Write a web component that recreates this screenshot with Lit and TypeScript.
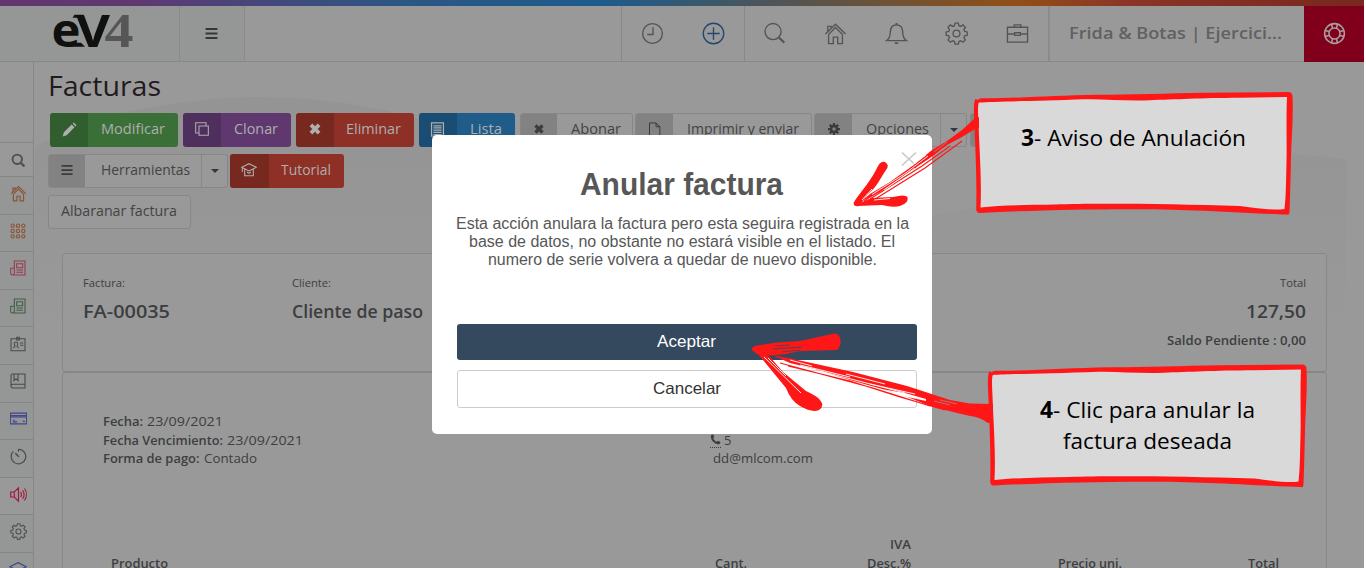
import { LitElement, html, css, svg, nothing } from "lit";
import { customElement, property } from "lit/decorators.js";

/** Single-line label whose glyphs are condensed or expanded to span `w` pixels. */
@customElement("fit-text")
class FitText extends LitElement {
  @property({ type: Number }) w = 0;
  @property() text = "";
  static styles = css`
    :host { display: inline-flex; white-space: nowrap; flex: none; }
    .t { display: block; white-space: pre; transform-origin: 0 50%; flex: none; }
  `;
  updated() {
    const el = this.renderRoot.querySelector(".t") as HTMLElement;
    el.style.transform = "none";
    const natural = el.getBoundingClientRect().width;
    el.style.transform = `scaleX(${(this.w / natural).toFixed(4)})`;
    this.style.width = this.w + "px";
  }
  render() {
    return html`<span class="t">${this.text}</span>`;
  }
}

const GEAR = svg`<path d="M10.300 2h3.400l.6 2.700 1.900.8 2.400-1.500 2.400 2.400-1.500 2.400.8 1.900 2.700.6v3.400l-2.700.6-.8 1.900 1.500 2.400-2.400 2.400-2.400-1.500-1.900.8-.6 2.700h-3.400l-.6-2.700-1.900-.8L5.400 22 3 19.600l1.500-2.400-.8-1.900L1 14.700v-3.400l2.700-.6.8-1.900L3 6.400 5.400 4l2.400 1.500 1.900-.8z" transform="translate(.2 -.9)"/><circle cx="12" cy="12" r="3.600"/>`;

const ICONS: Record<string, unknown> = {
  clock: svg`<circle cx="12" cy="12" r="10.300"/><path d="M12.500 5.500v7.500h-6"/>`,
  plus: svg`<circle cx="12" cy="12" r="10.700"/><path d="M5.500 12h13M12 5.500v13"/>`,
  search: svg`<circle cx="10.500" cy="10" r="8.400"/><path d="M16.500 16.200l5.700 5.300" stroke-width="2.200"/>`,
  home: svg`<path d="M1.500 12.500L12 2.300l10.500 10.200M4.700 13L12 5.800l7.300 7.200M4.800 13v9.500h4.900v-6.700h4.600v6.700h4.900V13M4 10V4.500h3.500V7"/>`,
  bell: svg`<path d="M1.500 19.500c3-2 4-4 4-8.500 0-5 2.500-8 6.500-8s6.500 3 6.500 8c0 4.500 1 6.500 4 8.500z"/><path d="M12 1v2M10.200 22h3.600" stroke-width="2"/>`,
  gear: GEAR,
  briefcase: svg`<path d="M1.500 5.500h21v15.500h-21zM8.500 5.500V3h7v2.500M1.500 12.500H9m6 0h7.500M9 11.200h6v2.800H9z"/>`,
  ring: svg`<circle cx="12" cy="12" r="10.300"/><circle cx="12" cy="12" r="5.800"/><path d="M8.800 2l1.200 4.500M15.200 2L14 6.500M8.800 22l1.200-4.500M15.200 22L14 17.500M2 8.800l4.500 1.200M2 15.200L6.500 14M22 8.800L17.500 10M22 15.200L17.500 14"/>`,
  find: svg`<circle cx="10" cy="10" r="7.500" stroke-width="3"/><path d="M15.500 15.500l6 6" stroke-width="3.600"/>`,
  grid: svg`${[4, 12, 20].map((y) => [4, 12, 20].map((x) => svg`<circle cx=${x} cy=${y} r="2.500"/>`))}`,
  news: svg`<path d="M6.500 1.500h16v21h-19c-1.500 0-2.500-1-2.500-2.500V12.500h5.500zM6.500 12v8c0 1.500-1 2.500-2.500 2.500M10 5.500h9v6h-9zM9.500 15h10M9.500 18.500h10"/>`,
  idcard: svg`<path d="M1.500 4h21v18h-21zM10 2h4v4h-4zM5 18.500c0-2 2.500-1.500 2.500-3.500C5.500 12.500 6 9 9 9s3.500 3.500 1.500 6c0 2 2.500 1.500 2.500 3.500M15 10.500h5M15 14h5"/>`,
  book: svg`<path d="M4 1.500h18.500v21H4c-1.700 0-2.500-1-2.500-2.500V4c0-1.500.8-2.500 2.500-2.500zM1.500 19c.3-1.300 1-2 2.500-2h18.500M6 1.500v10L9 8.500l3 3v-10"/>`,
  card: svg`<path d="M.5 4.500h23v15H.5zM.5 8h23M.5 9.800h23M4 14.500h3M4 16.800h6M18 16h3"/>`,
  timer: svg`<path d="M12 1.800v3.500M12 1.800a10.300 10.300 0 1 1-7.300 3"/><path d="M7.500 7.500l5 5" stroke-width="2"/>`,
  volume: svg`<path d="M1 8.500h5l6-6v19l-6-6H1zM6 8.500v7M15 8.500c1.300 2 1.300 5 0 7M17.800 6c2.500 3.500 2.500 8.500 0 12M20.500 3.500c3.500 5 3.500 12 0 17"/>`,
  layers: svg`<path d="M12 3.500l11 5.500-11 5.500L1 9zM1 13l11 5.500L23 13"/>`,
  bars: svg`<path d="M2.500 4.800h19M2.500 12h19M2.500 19.200h19" stroke-width="3"/>`,
  pencil: svg`<path d="M1 23l2-6.500L15.500 4l4.500 4.500L7.500 21zM17 2.500l1.800-1.700 4.500 4.500L21.500 7z" fill="currentColor" stroke="none"/>`,
  copy: svg`<path d="M7.500 7.500h14v14h-14zM7 18H2.500V2.500H18V7"/>`,
  cross: svg`<path d="M5 5l14 14M19 5L5 19" stroke-width="6.500"/>`,
  list: svg`<path d="M2.500 1.500h19v21h-19z" stroke-width="2"/><path d="M5.500 6h13M5.500 9.500h13M5.500 13h13M5.500 16.500h13M5.500 20h13" stroke-width="2"/>`,
  page: svg`<path d="M4 1.500h10.500l6 6v15H4zM14.500 1.500v6h6"/>`,
  cog: svg`<circle cx="12" cy="12" r="6" stroke-width="5"/><path d="M12 0v5M12 19v5M0 12h5M19 12h5M3.500 3.500l3.500 3.500M17 17l3.500 3.500M20.500 3.500L17 7M7 17l-3.500 3.500" stroke-width="4.500"/>`,
  cap: svg`<path d="M12 2.500l11 5.500-11 5.500L1 8zM5.500 10.500v10h13v-10M9 15l3 2 3-2M2 9v6"/>`,
  phone: svg`<path d="M2 4C3 1.500 5.500.5 7 1.500l2.500 5L7 9.500c1 3 4 6.500 7.500 7.500l3-2.500 5 3c.5 2-1 4.500-3.500 5C10 23 .5 13 2 4z" fill="currentColor" stroke="none"/>`,
};

const icon = (name: string, size: number, sw = 1.4) =>
  html`<svg class="ico" width=${size} height=${size} viewBox="0 0 24 24" fill="none" stroke="currentColor" stroke-width=${sw}>${ICONS[name]}</svg>`;

const SIDE: [string, string, number][] = [
  ["home", "#8a5238", 17], ["grid", "#8c5236", 16], ["news", "#99394e", 16], ["news", "#3c6046", 16],
  ["idcard", "#4b4b4d", 16], ["book", "#48484c", 16], ["card", "#41458c", 17], ["timer", "#484a4a", 17],
  ["volume", "#a0183c", 17], ["gear", "#505252", 17], ["layers", "#41458c", 18],
];

interface Btn { l: string; i?: string; tone: string; m: number; w: number; iw: number; tw: number; caret?: number; is?: number; shift?: number }
const ROW1: Btn[] = [
  { l: "Modificar", i: "pencil", tone: "green", m: 2, w: 128, iw: 38, tw: 64, is: 15 },
  { l: "Clonar", i: "copy", tone: "purple", m: 5, w: 108, iw: 38, tw: 44, is: 16 },
  { l: "Eliminar", i: "cross", tone: "red", m: 4.5, w: 118, iw: 38, tw: 55, is: 14 },
  { l: "Lista", i: "list", tone: "blue", m: 5, w: 96, iw: 38, tw: 32, is: 15 },
  { l: "Abonar", i: "cross", tone: "plain", m: 5, w: 113.5, iw: 36, tw: 50, is: 12, shift: 3 },
  { l: "Imprimir y enviar", i: "page", tone: "plain", m: 2, w: 176.5, iw: 36.5, tw: 112, is: 15, shift: 3 },
  { l: "Opciones", i: "cog", tone: "plain", m: 2.5, w: 153, iw: 37, tw: 63, caret: 26, is: 12, shift: 3 },
  { l: "", i: "cross", tone: "plain", m: 2.5, w: 114, iw: 37, tw: 50, is: 12 },
];
const ROW2: Btn[] = [
  { l: "Herramientas", i: "bars", tone: "plain", m: 0, w: 180, iw: 36, tw: 89, caret: 26, is: 14, shift: 4 },
  { l: "Tutorial", i: "cap", tone: "red", m: 1.5, w: 114, iw: 39, tw: 50, is: 16 },
];
const ROW3: Btn[] = [{ l: "Albaranar factura", tone: "plain", m: 0, w: 142.5, iw: 0, tw: 116 }];

const FRAME_OUT = "M3 3C4 1.500 6 1.300 9 1.300C50 1 80 -1.500 120 -2.200C160 -2.200 190 -3.500 230 -4.200L313 -5C316 -5 317.500 -3.500 317.500 0C318.500 20 316.500 40 316 60C315.500 85 315 100 314.500 115C314 118 314 117.800 311 117.600C290 117 250 114.500 220 113.500C170 111 80 112 5 116C2.500 116.200 1.500 115 1.200 112C2 85 0.500 55 -0.500 30C-1 18 -2 5 0.500 2Z";
const FRAME_IN = "M3.800 5.500C20 4.500 60 4 110 2.200C130 1.800 150 4.200 175 3.200C200 2.500 225 1 265 0.800L312 0C311 20 312 50 311.500 65C311 85 311 100 309.500 112C300 113.500 285 111.500 265 109C200 107 120 106 80 107.500C50 108 25 108.500 5.500 110.500C6.500 90 5.500 70 4 40C3.800 25 2 10 3.800 5.500Z";

@customElement("app-root")
class AppRoot extends LitElement {
  static styles = css`
    :host { display: block; position: relative; width: 1366px; height: 568px; overflow: hidden; background: #fff;
      font-family: "Open Sans", "Noto Sans", sans-serif; color: #3d3e40; }
    * { box-sizing: border-box; }
    .ico { display: block; flex: none; }
    .page { width: 1364px; height: 568px; background: #999; display: flex; flex-direction: column; overflow: hidden; }
    .rainbow { height: 6px; flex: none; background: linear-gradient(90deg, #62366e 0, #5f3871 130px, #2b5784 400px, #1d5b8c 600px, #55544f 800px, #914f17 1015px, #8b3427 1130px, #78281f 1364px); }
    .top { height: 56px; flex: none; display: flex; border-bottom: 1px solid #888; color: #535455; }
    .brand { width: 180px; background: #949796; border-right: 1px solid #888b8a; padding-left: 50px; }
    .logo { overflow: visible; }
    .burger { width: 65px; background: #949796; border-right: 1px solid #888b8a; display: flex; align-items: center; justify-content: center; color: #343638; padding-right: 2px; }
    .tools { margin-left: auto; display: flex; align-items: center; height: 55px; }
    .group { display: flex; height: 55px; align-items: center; border-left: 1px solid #888; }
    .cell { width: 60.7px; display: flex; justify-content: center; }
    .add { color: #25476f; }
    .company { width: 256px; height: 55px; display: flex; align-items: center; border-left: 2px solid #8b8b8b; padding-left: 19px; padding-bottom: 2px; font-size: 17px; font-weight: 600; color: #606162; }
    .help { width: 60px; height: 56px; background: #80001c; display: flex; align-items: center; justify-content: center; color: #a99da0; align-self: flex-start; padding-bottom: 2px; }
    .body { display: flex; flex: 1; min-height: 0; }
    .side { width: 34px; flex: none; border-right: 1px solid #858686; display: flex; flex-direction: column; overflow: hidden; }
    .gap { height: 80px; flex: none; }
    .find { height: 34px; flex: none; border-top: 1px solid #868686; display: flex; align-items: center; justify-content: center; color: #4d4f50; padding: 2px 0 0 4px; }
    .item { height: 37.6px; flex: none; border-top: 1px solid #848786; background: #949796; display: flex; align-items: center; justify-content: center; padding: 0 0 4px 3px; }
    .item.lit { background: #999; }
    .main { flex: 1; position: relative; padding: 0 0 0 14px; }
    .blob { position: absolute; left: 0; top: 0; }
    .flow { position: relative; display: flex; flex-direction: column; }
    h1 { margin: 0; height: 51px; line-height: 47px; font-size: 27px; font-weight: 400; color: #211b1d; padding-left: 0; }
    .row { display: flex; height: 34px; margin-bottom: 7px; }
    .btn { height: 34px; flex: none; display: flex; border-radius: 3px; overflow: hidden; font-size: 14px; color: #aeaeae; }
    .lead { height: 100%; display: flex; align-items: center; justify-content: center; flex: none; background: rgba(0, 0, 0, .16); padding-bottom: 2px; }
    .label { flex: 1; display: flex; align-items: center; justify-content: center; padding-bottom: 3px; }
    .caret { display: flex; align-items: center; justify-content: center; border-left: 1px solid #888; }
    .tri { border: 4px solid transparent; border-top-color: #343638; border-bottom: 0; }
    .green { background: #3a7038; } .purple { background: #5f386f; } .red { background: #8e3026; } .blue { background: #1f5c89; }
    .plain { border: 1px solid #878787; color: #424345; background: #999; }
    .plain .lead { background: #828282; color: #3a3b3d; }
    .card { width: 1265px; margin-left: 14px; border: 1px solid #878787; border-radius: 3px; background: #999; }
    .head { height: 119px; margin-top: 17px; display: flex; padding: 20px 20px 0; }
    .col { display: flex; flex-direction: column; }
    .end { width: 32px; align-items: flex-end; }
    .c1 { width: 209px; }
    .right { margin-left: auto; align-items: flex-end; }
    .small { font-size: 11px; line-height: 18px; height: 18px; }
    .big { font-size: 18px; font-weight: 600; line-height: 24px; height: 24px; margin-top: 7px; }
    .saldo { font-size: 12px; font-weight: 600; line-height: 18px; margin-top: 9px; }
    .detail { height: 240px; padding: 39px 0 0 40px; font-size: 13px; }
    .info { display: flex; height: 123px; }
    .lines { width: 607px; }
    .line { height: 18.5px; line-height: 18.5px; display: flex; gap: 4px; align-items: center; }
    .b { font-weight: 600; }
    .tel { border-bottom: 1px dotted #3d3e40; height: 17px; display: flex; align-items: center; }
    .five { margin-left: -1px; }
    .mail { padding-left: 3px; }
    .thead { display: grid; grid-template-columns: 604px 164px 179px 190px 40px; padding-left: 8px; font-weight: 600; line-height: 18.5px; align-items: end; }
    .modal { position: absolute; left: 432px; top: 135px; width: 500px; height: 299px; border-radius: 5px; background: #fff; padding: 0 15px 0 25px;
      font-family: "Liberation Sans", Arial, sans-serif; color: #575757; display: flex; flex-direction: column; }
    .title { height: 52px; margin-top: 24px; line-height: 52px; font-size: 31px; font-weight: 700; text-align: center; padding-right: 11px; }
    .msg { margin-left: -5px; font-size: 16px; line-height: 18px; height: 113px; padding: 4px 5px 0 0; display: flex; flex-direction: column; align-items: center; }
    .ok { height: 36px; background: #34495e; border-radius: 3px; color: #fff; font-size: 16.5px; display: flex; align-items: center; justify-content: center; padding: 0 1px 1px 0; }
    .no { height: 38px; margin-top: 10px; border: 1px solid #ccc; border-radius: 3px; color: #333; font-size: 16.5px; display: flex; align-items: center; justify-content: center; padding-bottom: 1px; }
    .x { position: absolute; left: 469px; top: 16px; }
    .marks { position: absolute; left: 0; top: 0; }
    .note { position: absolute; width: 313px; font-size: 22.4px; line-height: 31px; color: #000; display: flex; flex-direction: column; align-items: center; }
    .n3 { left: 977px; top: 122px; } .n4 { left: 991px; top: 394px; }
    .nb { display: flex; }
    .nb .b { font-weight: 700; }
  `;

  btn(b: Btn) {
    return html`<div class="btn ${b.tone}" style="width:${b.w}px;margin-left:${b.m}px">
      ${b.i ? html`<span class="lead" style="width:${b.iw}px">${icon(b.i, b.is ?? 14, 1.6)}</span>` : nothing}
      <span class="label" style="padding-left:${b.shift ?? 0}px">${b.l ? html`<fit-text w=${b.tw} text=${b.l}></fit-text>` : nothing}</span>
      ${b.caret ? html`<span class="caret" style="width:${b.caret}px"><i class="tri"></i></span>` : nothing}
    </div>`;
  }

  render() {
    return html`
      <div class="page">
        <div class="rainbow"></div>
        <header class="top">
          <div class="brand">
            <svg class="logo" width="90" height="50" viewBox="50 6 90 50">
              <text x="51.500" y="46.500" font-family="Open Sans" font-size="46" font-weight="700" fill="#10100f" textLength="29" lengthAdjust="spacingAndGlyphs">e</text>
              <text x="76" y="47" font-family="Open Sans" font-size="45" font-weight="700" fill="#10100f" textLength="34" lengthAdjust="spacingAndGlyphs">V</text>
              <path d="M74.500 14.800h9v3h-11z" fill="#10100f"/><path d="M66 42.800h15l4 4H66z" fill="#10100f"/>
              <text x="104.500" y="47" font-family="Liberation Serif" font-size="48.500" font-weight="700" fill="#565656" textLength="29" lengthAdjust="spacingAndGlyphs">4</text>
            </svg>
          </div>
          <div class="burger">${icon("bars", 15)}</div>
          <div class="tools">
            <div class="group"><span class="cell">${icon("clock", 23)}</span><span class="cell add">${icon("plus", 23)}</span></div>
            <div class="group">
              ${["search", "home", "bell", "gear", "briefcase"].map((n) => html`<span class="cell">${icon(n, 23)}</span>`)}
            </div>
            <div class="company"><fit-text w="213" text="Frida &amp; Botas | Ejercici..."></fit-text></div>
            <div class="help">${icon("ring", 23, 1.6)}</div>
          </div>
        </header>
        <div class="body">
          <nav class="side">
            <div class="gap"></div>
            <div class="find">${icon("find", 15)}</div>
            ${SIDE.map(([n, c, s]) => html`<div class="item ${n === "volume" ? "lit" : ""}" style="color:${c}">${icon(n, s, 1.6)}</div>`)}
          </nav>
          <main class="main">
            <svg class="blob" width="1330" height="300" viewBox="34 62 1330 300">
              <defs><linearGradient id="g" x2="0" y2="1"><stop offset="0" stop-color="#949494"/><stop offset="1" stop-color="#999"/></linearGradient></defs>
              <path fill="url(#g)" d="M35 147C90 112 190 97 260 97C400 98 480 140 600 180C750 232 880 230 1000 203C1100 175 1200 148 1300 155Q1330 156 1346 160V338H35Z"/>
            </svg>
            <div class="flow">
              <h1><fit-text w="113" text="Facturas"></fit-text></h1>
              <div class="row">${ROW1.map((b) => this.btn(b))}</div>
              <div class="row">${ROW2.map((b) => this.btn(b))}</div>
              <div class="row">${ROW3.map((b) => this.btn(b))}</div>
              <section class="card head">
                <div class="col c1"><span class="small"><fit-text w="42" text="Factura:"></fit-text></span><span class="big"><fit-text w="87" text="FA-00035"></fit-text></span></div>
                <div class="col"><span class="small"><fit-text w="39" text="Cliente:"></fit-text></span><span class="big"><fit-text w="131" text="Cliente de paso"></fit-text></span></div>
                <div class="col right"><span class="small"><fit-text w="26" text="Total"></fit-text></span><span class="big"><fit-text w="60" text="127,50"></fit-text></span><span class="saldo"><fit-text w="139" text="Saldo Pendiente : 0,00"></fit-text></span></div>
              </section>
              <section class="card detail">
                <div class="info">
                  <div class="lines">
                    <div class="line"><fit-text class="b" w="40" text="Fecha:"></fit-text><fit-text w="76" text="23/09/2021"></fit-text></div>
                    <div class="line"><fit-text class="b" w="120" text="Fecha Vencimiento:"></fit-text><fit-text w="76" text="23/09/2021"></fit-text></div>
                    <div class="line"><fit-text class="b" w="96.500" text="Forma de pago:"></fit-text><fit-text w="53" text="Contado"></fit-text></div>
                  </div>
                  <div>
                    <div class="line"></div>
                    <div class="line"><span class="tel">${icon("phone", 11)}</span><span class="five">5</span></div>
                    <div class="line mail"><fit-text w="100" text="dd@mlcom.com"></fit-text></div>
                  </div>
                </div>
                <div class="thead">
                  <fit-text w="57" text="Producto"></fit-text>
                  <fit-text w="32" text="Cant."></fit-text>
                  <span class="col end"><fit-text w="21" text="IVA"></fit-text><fit-text w="44" text="Desc.%"></fit-text></span>
                  <fit-text w="64" text="Precio uni."></fit-text>
                  <fit-text w="31" text="Total"></fit-text>
                </div>
              </section>
            </div>
          </main>
        </div>
      </div>

      <div class="modal">
        <div class="title"><fit-text w="203" text="Anular factura"></fit-text></div>
        <div class="msg">
          <fit-text w="453" text="Esta acción anulara la factura pero esta seguira registrada en la"></fit-text>
          <fit-text w="426" text="base de datos, no obstante no estará visible en el listado. El"></fit-text>
          <fit-text w="389" text="numero de serie volvera a quedar de nuevo disponible."></fit-text>
        </div>
        <div class="ok"><fit-text w="59" text="Aceptar"></fit-text></div>
        <div class="no"><fit-text w="68" text="Cancelar"></fit-text></div>
        <svg class="x" width="16" height="16" stroke="#c9c9c9" stroke-width="1.700"><path d="M1 1.500L15 14.500M15 1.500L1 14.500"/></svg>
      </div>

      <svg class="marks" width="1366" height="568" viewBox="0 0 1366 568">
        <g transform="translate(975 97)"><path d=${FRAME_OUT} fill="#ff1717"/><path d=${FRAME_IN} fill="#d9d9d9"/></g>
        <g transform="translate(989 369.500)"><path d=${FRAME_OUT} fill="#ff1717"/><path d=${FRAME_IN} fill="#d9d9d9"/></g>
        <g fill="#ff1717">
          <path d="M979 117L974 119L962 130L947 141L932 150L915 164L890 182L870 194L862 201L880 192L912 170L930 158L947 145L962 137L975 129L979 128Z"/>
          <path d="M853.500 203C857 196 868 185 876 170Q880 160 885 162Q890 165 886 170C880 179 876 188 868 194L859 206Q854 207 853.500 203Z"/>
          <path d="M854 205L872 198L893 197Q905 194 907.500 197Q909 203 900 206Q893 208 882 205L858 206Z"/>
          <path d="M751.700 350Q752 346 757 345.500L777 342.500L800 341L832 334Q838 332 840 338Q842 345 837 350L800 351L786 354L770 355.500L757 354Z"/>
          <path d="M758 354L786 388Q791 401 800 406Q812 413 819 410Q825 406 820 400Q817 396 806 391L783 372L770 357L763 353Z"/>
          <path d="M772 355L793 359L853 372L907 386L950 400L970 403.500L993 404V422L988 423Q980 417 970 416L953 412L930 406L900 394L850 380L815 369L790 363Z"/>
        </g>
        <g fill="none" stroke="#ff1717" stroke-width="1.200">
          <path d="M870 199L922 166L950 146M872 201L925 168L962 141M864 201L916 167"/>
          <path d="M780 363L873 388L930 406M788 366L850 381L900 397L945 410"/>
        </g>
        <g fill="none" stroke="#fff" stroke-width=".9">
          <path d="M872 194.500L905 173.500L928 156M884 190L915 168M903 172L926 155M872 189L862 200M874 200L890 198.500"/>
          <path d="M764 357L801 393M768 358L786 376M800 365L850 377M820 371L905 393M846 374L885 384M870 384L915 394M790 360L812 366"/>
        </g>
        <path d="M884 389.500L905 393L926 399V401L903 396Z" fill="#fff"/>
        <g fill="none" stroke="#999" stroke-width=".7"><path d="M934 152L947 142M936 155L952 143M934 401L950 405M940 400L957 404"/></g>
        <g fill="none" stroke="#34495e" stroke-width=".8"><path d="M772 349L802 347M782 352L800 350M775 346L790 345"/></g>
      </svg>
      <div class="note n3"><span class="nb"><fit-text class="b" w="13" text="3"></fit-text><fit-text w="212" text="- Aviso de Anulación"></fit-text></span></div>
      <div class="note n4"><span class="nb"><fit-text class="b" w="13" text="4"></fit-text><fit-text w="202" text="- Clic para anular la"></fit-text></span><fit-text w="169" text="factura deseada"></fit-text></div>
    `;
  }
}
